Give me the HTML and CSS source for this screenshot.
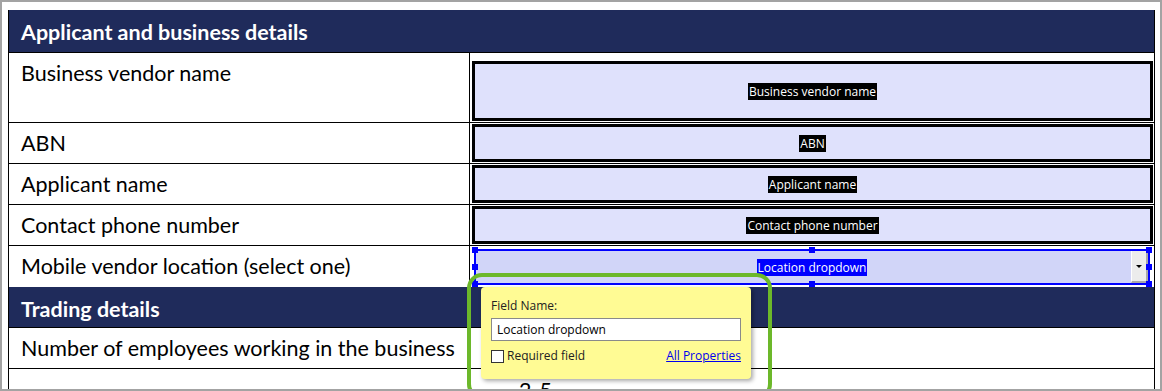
FILE: index.html
```html
<!DOCTYPE html>
<html lang="en">
<head>
    <meta charset="UTF-8">
    <meta name="viewport" content="width=device-width, initial-scale=1.0">
    <title>Form fields</title>
    <link rel="stylesheet" href="styles.css">
</head>
<body>

<div class="shot">
    <div class="sheet">
        <div class="section first">Applicant and business details</div>

        <div class="row tall">
            <div class="label">Business vendor name</div>
            <div class="cell">
                <div class="field big"><span class="tag">Business vendor name</span></div>
            </div>
        </div>
        <div class="row">
            <div class="label">ABN</div>
            <div class="cell">
                <div class="field"><span class="tag">ABN</span></div>
            </div>
        </div>
        <div class="row">
            <div class="label">Applicant name</div>
            <div class="cell">
                <div class="field"><span class="tag">Applicant name</span></div>
            </div>
        </div>
        <div class="row">
            <div class="label">Contact phone number</div>
            <div class="cell">
                <div class="field"><span class="tag">Contact phone number</span></div>
            </div>
        </div>
        <div class="row no-line">
            <div class="label">Mobile vendor location (select one)</div>
            <div class="cell">
                <div class="dropdown">
                    <span class="tag selected">Location dropdown</span>
                    <span class="drop-btn"><span class="arrow"></span></span>
                    <!-- selection handles -->
                    <i class="handle h-tl"></i>
                    <i class="handle h-tm"></i>
                    <i class="handle h-tr"></i>
                    <i class="handle h-ml"></i>
                    <i class="handle h-mr"></i>
                    <i class="handle h-bl"></i>
                    <i class="handle h-bm"></i>
                    <i class="handle h-br"></i>
                </div>
            </div>
        </div>

        <div class="section">Trading details</div>

        <div class="row">
            <div class="label">Number of employees working in the business</div>
            <div class="cell"></div>
        </div>
        <div class="row last">
            <div class="label"></div>
            <div class="cell option">2-5</div>
        </div>
    </div>

    <!-- field popup -->
    <div class="ring"></div>
    <div class="popup">
        <div class="popup-title">Field Name:</div>
        <input class="popup-input" type="text" value="Location dropdown">
        <div class="popup-foot">
            <label class="check"><span class="box"></span>Required field</label>
            <a href="#" class="link">All Properties</a>
        </div>
    </div>
</div>

</body>
</html>
```

FILE: styles.css
```css
body {
    margin: 0;
    background-color: #ffffff;
}
.shot {
    position: relative;
    width: 1162px;
    height: 391px;
    box-sizing: border-box;
    border: 2px solid #a3a3a3;
    padding: 8px 0 0 6px;
    overflow: hidden;
    background-color: #ffffff;
    font-family: Lato, "Open Sans", sans-serif;
}
.sheet {
    width: 1147px;
    box-sizing: border-box;
    border-left: 1px solid #000;
    border-right: 1px solid #000;
}
.section {
    height: 41px;
    box-sizing: border-box;
    padding: 10px 0 0 12px;
    background-color: #1f2b5b;
    color: #ffffff;
    font-size: 21.5px;
    font-weight: bold;
    line-height: 24px;
    border-bottom: 1px solid #000;
}
.section.first {
    height: 43px;
}
.row {
    display: grid;
    grid-template-columns: 461px 1fr;
    height: 41px;
    box-sizing: border-box;
    border-bottom: 1px solid #000;
}
.row.tall {
    height: 70px;
}
.row.no-line {
    border-bottom: none;
}
.row.last {
    height: 60px;
    border-bottom: none;
}
.label {
    border-right: 1px solid #000;
    padding: 8px 0 0 12px;
    font-size: 21.5px;
    line-height: 24px;
    color: #000;
}
.cell {
    padding: 1px 1px 1px 2px;
    box-sizing: border-box;
    height: 100%;
}
.cell.option {
    padding: 9px 0 0 49px;
    font-size: 21.5px;
    line-height: 24px;
}
.field {
    height: 100%;
    box-sizing: border-box;
    border: 3px solid #000;
    background-color: #dfe1fc;
    display: flex;
    align-items: center;
    justify-content: center;
}
.field.big {
    margin-top: 7px;
    height: 60px;
}
.tag {
    background-color: #000;
    color: #fff;
    font-family: "Open Sans", sans-serif;
    font-size: 12px;
    line-height: 17px;
    padding: 0 1px;
}
.tag.selected {
    background-color: #0000ff;
}
.dropdown {
    position: relative;
    margin: 2px 0 0 2px;
    width: 676px;
    height: 36px;
    box-sizing: border-box;
    border: 2px solid #0000ff;
    background-color: #d1d5f8;
    display: flex;
    align-items: center;
    justify-content: center;
}
.drop-btn {
    position: absolute;
    top: 0;
    right: 0;
    width: 17px;
    height: 32px;
    box-sizing: border-box;
    background-color: #ececec;
    border-right: 2px solid #a9a9a9;
    border-bottom: 2px solid #a9a9a9;
    border-left: 1px solid #ffffff;
    display: flex;
    align-items: center;
    justify-content: center;
}
.arrow {
    width: 0;
    height: 0;
    border-left: 3px solid transparent;
    border-right: 3px solid transparent;
    border-top: 3px solid #000;
}
.handle {
    position: absolute;
    width: 6px;
    height: 6px;
    background-color: #0000ff;
    transform: translate(-50%, -50%);
}
.h-tl { left: -1px; top: -1px; }
.h-tm { left: 50%; top: -1px; }
.h-tr { left: calc(100% + 1px); top: -1px; }
.h-ml { left: -1px; top: 50%; }
.h-mr { left: calc(100% + 1px); top: 50%; }
.h-bl { left: -1px; top: calc(100% + 1px); }
.h-bm { left: 50%; top: calc(100% + 1px); }
.h-br { left: calc(100% + 1px); top: calc(100% + 1px); }

.ring {
    position: absolute;
    left: 465px;
    top: 271px;
    width: 297px;
    height: 118px;
    border: 4px solid #6cb82a;
    border-radius: 15px;
}
.popup {
    position: absolute;
    left: 479px;
    top: 285px;
    width: 270px;
    height: 92px;
    box-sizing: border-box;
    padding: 11px 10px 0 10px;
    background-color: #fffb94;
    border-radius: 4px;
    box-shadow: 2px 2px 4px rgba(0, 0, 0, 0.35);
    font-family: "Open Sans", sans-serif;
    font-size: 12px;
    color: #222;
}
.popup-title {
    line-height: 16px;
}
.popup-input {
    display: block;
    margin-top: 4px;
    width: 250px;
    height: 23px;
    box-sizing: border-box;
    border: 1px solid #8a8a8a;
    padding: 0 5px;
    font-family: "Open Sans", sans-serif;
    font-size: 12px;
    color: #000;
    background-color: #fff;
}
.popup-foot {
    display: flex;
    justify-content: space-between;
    align-items: center;
    margin-top: 7px;
    width: 250px;
    line-height: 16px;
}
.check {
    display: flex;
    align-items: center;
}
.box {
    width: 13px;
    height: 13px;
    box-sizing: border-box;
    border: 1px solid #333;
    background-color: #fff;
    margin-right: 3px;
}
.link {
    color: #0000ee;
    text-decoration: underline;
}
```
